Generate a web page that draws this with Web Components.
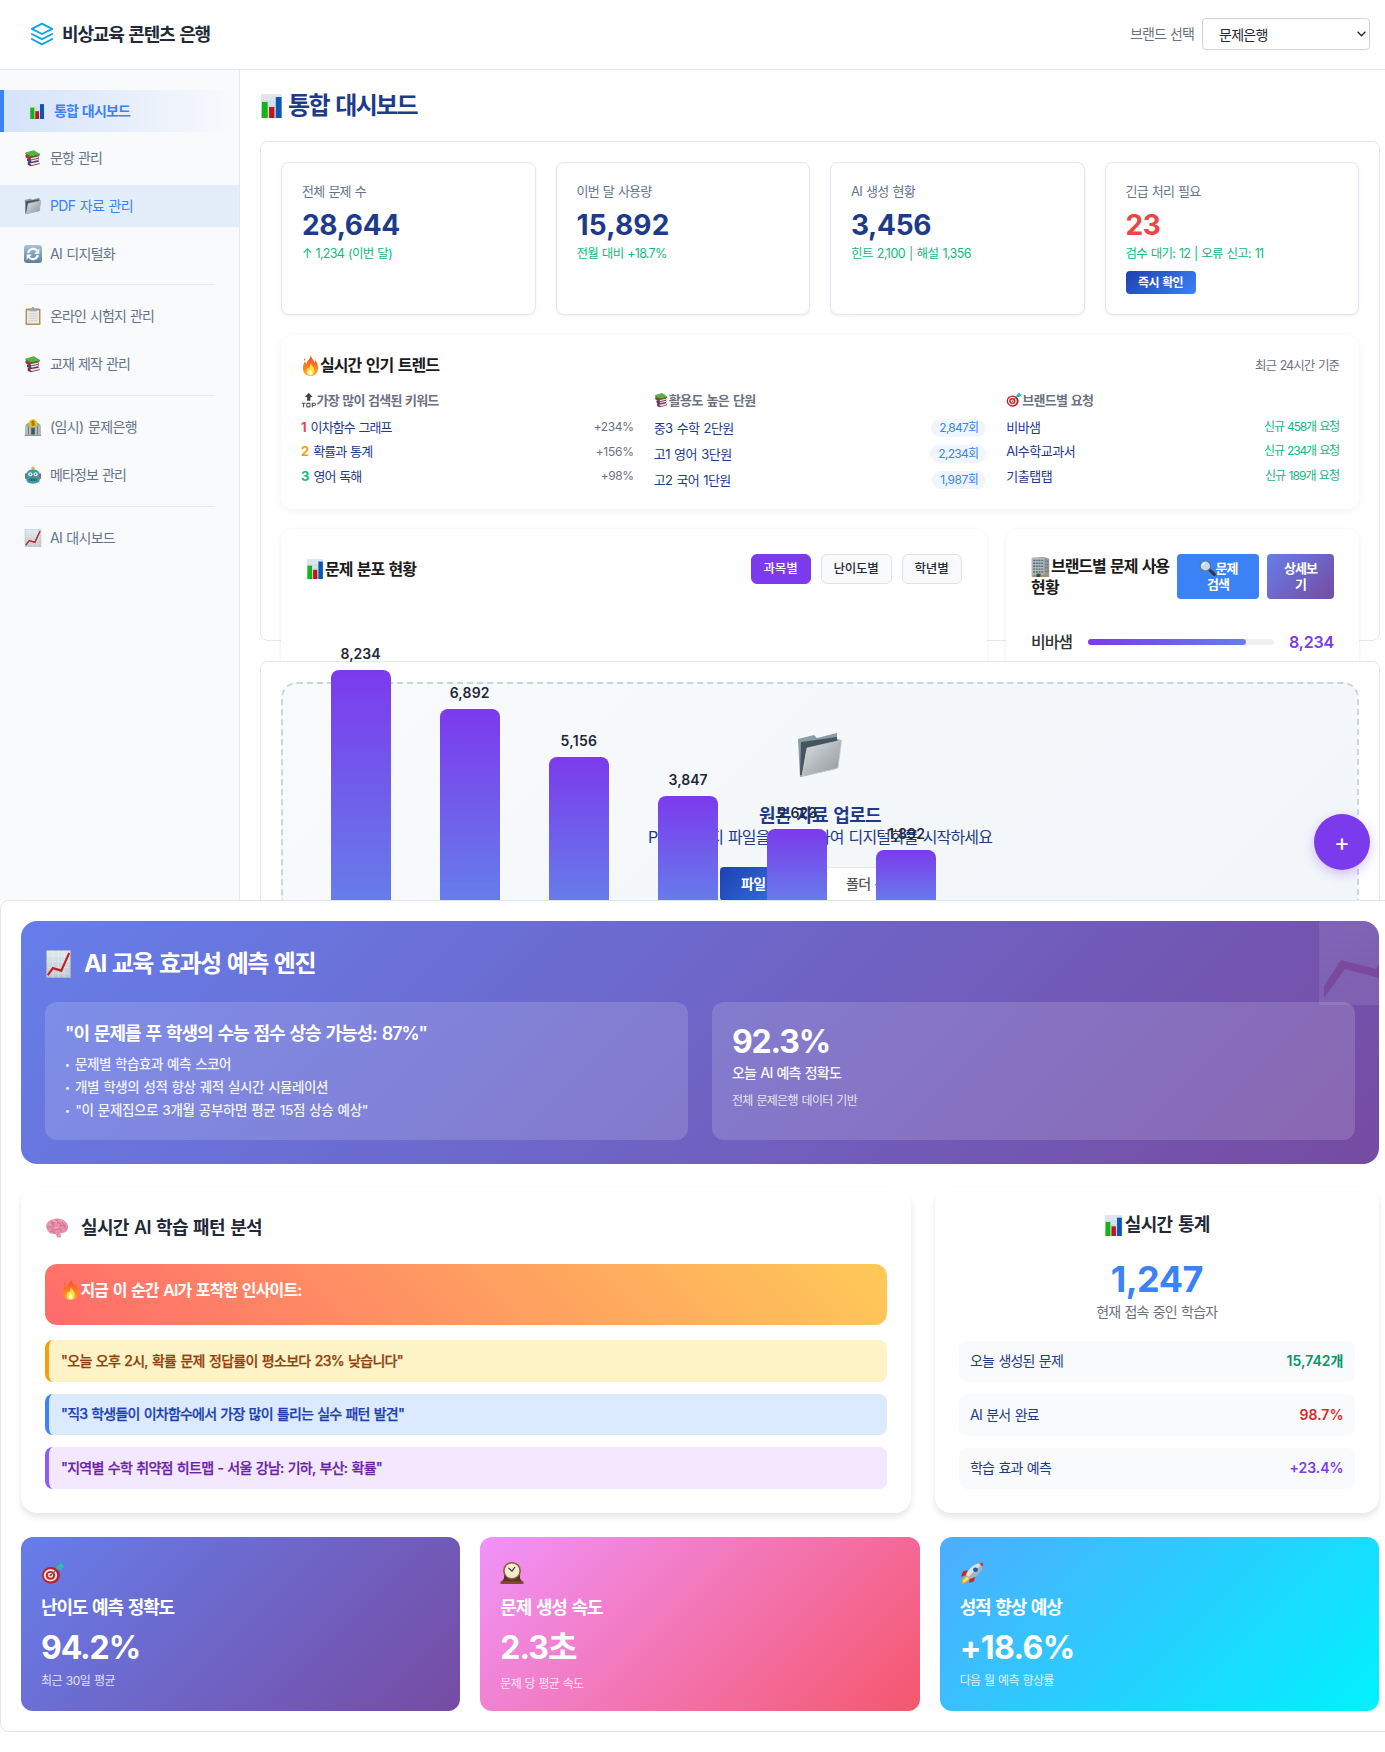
<!DOCTYPE html>
<html lang="ko">
<head>
<meta charset="utf-8">
<title>비상교육 콘텐츠 은행</title>
<style>
html,body{margin:0;padding:0;background:#fff}
body{width:1385px;height:1752px;overflow:hidden;font-family:Inter,"Noto Sans CJK KR",sans-serif;font-size:14px;line-height:20px;color:#1f2937}
</style>
</head>
<body>
<bank-app></bank-app>
<script>
const BASE = '*{box-sizing:border-box}';
const G = '<linearGradient id="pg" x1="0" y1="0" x2="0" y2="1"><stop offset="0" stop-color="#dfe9ef"/><stop offset="1" stop-color="#bcc8d0"/></linearGradient>';
const GLYPHS = {
bars:'<defs>'+G+'</defs><path fill="url(#pg)" d="M1 0h22v24H1z"/><path stroke="#fff" stroke-width=".5" opacity=".7" d="M1 5h22M1 10h22M1 15h22"/><path fill="#12b516" d="M2 8h6v16H2z"/><path fill="#c3131b" d="M9.500 13h5.500v11H9.500z"/><path fill="#0a57b8" d="M16.500 3h6v21h-6z"/>',
line:'<defs>'+G+'</defs><path fill="url(#pg)" stroke="#a9b5bd" stroke-width=".6" d="M1.4 .4h21.200v23.200H1.400z"/><path stroke="#fff" stroke-width=".4" opacity=".6" d="M2 5h20M2 10h20M2 15h20M2 20h20M7 0v24M12 0v24M17 0v24"/><path fill="none" stroke="#c4202b" stroke-width="1.900" d="M2.500 21.500 7 15.500l7.500 2.200L21.500 2.500"/>',
books:'<path fill="#7a2a55" d="M5 17l14-2 2 5-12 3-4-2z"/><path fill="#ece7df" d="M8 19l12-2 .5 2L10 21.5z"/><path fill="#1e4f96" d="M4 13l15-2 1 4-11 3-5-2z"/><path fill="#e9edf0" d="M9 15l10-2 .5 1.600L10 17z"/><path fill="#c32631" d="M2 8l17 1 1 3-11 3.400L2 11z"/><path fill="#f0ece4" d="M9 12l10-2v1.600L9.500 14z"/><path fill="#2f7f2f" d="M2 4.500L9 9.500l12-3.300v2.500L9 12 2 7z"/><path fill="#5cae45" d="M2 4.500L13 1.500l8 4.700L9 9.500z"/>',
folder:'<defs><linearGradient id="fg" x1="0" y1="0" x2="1" y2="1"><stop offset="0" stop-color="#dcdee3"/><stop offset="1" stop-color="#8f959a"/></linearGradient></defs><path fill="#8d9ba4" d="M1 4l8-2 1.500 1.500L20.500 1v3l2 .5L20 19 2 23z"/><path fill="#45555f" d="M2.500 5.500L20.500 3v3L5 10 3 22H2z"/><path fill="url(#fg)" stroke="#c9cdd1" stroke-width=".4" d="M5.500 8.500L22.800 4.600 21 18.500 3 22.800z"/>',
sync:'<defs><linearGradient id="sg" x1="0" y1="0" x2="0" y2="1"><stop offset="0" stop-color="#a9c2d6"/><stop offset="1" stop-color="#587f9f"/></linearGradient></defs><rect width="24" height="24" rx="4" fill="url(#sg)"/><path fill="none" stroke="#fff" stroke-width="2.800" d="M5.500 10.500a7 7 0 0 1 12-3M18.500 13.500a7 7 0 0 1-12 3"/><path fill="#fff" d="M20.500 4.500v7h-7zM3.500 19.500v-7h7z"/>',
clip:'<rect x="2" y="2" width="20" height="22" rx="1.500" fill="#b78f5c"/><path fill="#e9e9e7" d="M4 4.500h16V22H4z"/><path stroke="#c6c6c4" stroke-width=".8" d="M6 9h12M6 12h12M6 15h12M6 18h12"/><path fill="#9ba6ad" d="M7 2h3l1-2h2l1 2h3v3.500H7z"/>',
bank:'<path fill="#8b9a94" d="M1 22h22v2H1z"/><path fill="#9fae9f" d="M2 9l10-7 10 7v2H2z"/><path fill="#6f807b" d="M2 11h20v11H2z"/><path fill="#c6d0c8" d="M3 11h2v11H3zm4 0h2v11H7zm8 0h2v11h-2zm4 0h2v11h-2z"/><path fill="#3f5561" d="M10 14h4v8h-4z"/><circle cx="12" cy="7" r="5.500" fill="#e9bf27"/><path fill="none" stroke="#8b6a0b" stroke-width="1.200" d="M14 5q-4-1.500-4 .5t2 1.400 2 1.500-4 .9M12 3.300v7.400"/>',
robot:'<circle cx="12" cy="3" r="2.200" fill="#f0a93a"/><path fill="#bd3d25" d="M1.500 10h3v7h-3zm18 0h3v7h-3z"/><path fill="#3f9aa1" d="M3 12q0-7.500 9-7.500t9 7.500v6q0 5.500-9 5.500T3 18z"/><circle cx="8.500" cy="11" r="2.800" fill="#d8f4f5"/><circle cx="15.500" cy="11" r="2.800" fill="#d8f4f5"/><circle cx="8.500" cy="11" r="1" fill="#2c6e78"/><circle cx="15.500" cy="11" r="1" fill="#2c6e78"/><path fill="#d04a31" d="M12 12l1.300 2.500h-2.600z"/><rect x="7" y="16.500" width="10" height="3.200" rx="1" fill="#1b4b54"/><path stroke="#a9dde0" stroke-width=".7" d="M9 16.500v3M12 16.500v3M15 16.500v3"/>',
fire:'<defs><linearGradient id="f1" x1="0" y1="0" x2="0" y2="1"><stop offset="0" stop-color="#f4472a"/><stop offset=".7" stop-color="#ff8a1f"/><stop offset="1" stop-color="#ffb52e"/></linearGradient></defs><path fill="url(#f1)" d="M12.500 0c.5 4.500 4 5.500 4.500 9 1-1 1-2.500.8-3.500C20.500 8.500 22 12 21.500 16c-.6 5-4.500 8-9.500 8s-9-3-9.500-8C2.100 12 4 9 5 7c.4 1.500.8 2.500 2 3C7.500 6 12 5 12.500 0z"/><path fill="#ffe14a" d="M12.500 9c.5 3 4.500 5 4.500 9 0 3.500-2.200 5.500-5 5.500s-5-2-5-5c0-2 1-3.500 2-4.500.3 1 .7 1.500 1.500 2 0-3 1.500-4.500 2-7z"/><path fill="#fffde0" d="M12 16c.6 1.500 2 2.500 2 4.500 0 1.600-1 2.500-2.200 2.500s-2-1-2-2.500c0-1.800 1.600-2.500 2.200-4.500z"/><path fill="#f4632d" d="M3.500 5l1.800-1.500L5 7z"/>',
top:'<path fill="#424548" d="M12 1l6 6.500h-3.500V13h-5V7.500H6z"/><path fill="none" stroke="#505356" stroke-width="1.700" d="M1 16.800h6M4 16.800V23M10.200 17h2.600q1.200 0 1.200 1.200v3q0 1.200-1.200 1.200h-2.600q-1.200 0-1.200-1.200v-3q0-1.200 1.200-1.200zM17.500 23v-6.200h3.300q1.700 0 1.700 1.700t-1.700 1.700h-3.300"/>',
target:'<ellipse cx="10" cy="14.500" rx="9" ry="9" fill="#b52128"/><ellipse cx="9.500" cy="14.500" rx="6.700" ry="6.800" fill="#f3e5e1"/><ellipse cx="9.500" cy="14.500" rx="4.700" ry="4.800" fill="#c8252c"/><ellipse cx="9.500" cy="14.500" rx="2.600" ry="2.700" fill="#f5e9e5"/><circle cx="9.500" cy="14.500" r="1.100" fill="#b52128"/><path stroke="#56656d" stroke-width="1.300" d="M10 14l7-7"/><path fill="#35b5b8" d="M15.500 5l5-4.500.5 3 3 .5-4.500 4.500-3.500-.5z"/>',
building:'<path fill="#8e999c" d="M1 1l15-1 7 2v22H1z"/><path fill="#b2babb" d="M1 1h16v23H1z"/><path stroke="#53717f" stroke-width="1.700" stroke-dasharray="2.600 .9" d="M2.500 4h14M2.500 7.500h14M2.500 11h14M2.500 14.500h14M2.500 18h14"/><path stroke="#5b6b72" stroke-width="1.300" stroke-dasharray="1.500 1" d="M18 5h5M18 9h5M18 13h5M18 17h5"/><path fill="#b98d58" d="M2 21h20v3H2z"/><path fill="#344a55" d="M7 20h5v4H7z"/>',
search:'<path stroke="#33373a" stroke-width="4.500" stroke-linecap="round" d="M15 15l6.500 6.500"/><circle cx="9" cy="9" r="7.500" fill="#bcdcf4" stroke="#667580" stroke-width="1.800"/><path fill="none" stroke="#fff" opacity=".8" stroke-width="1.500" d="M5 9q0-4 4-4.500"/>',
brain:'<path fill="#e790ab" d="M2 14C-.5 9 3 4 8 2.500c5-2 11-.5 13.500 4 2.500 4 2 9-1.500 11-1.500 1-3 .8-4.500.8L16 23l-3.500.5-2-4C7 20 3 18 2 14z"/><path fill="none" stroke="#c2607f" stroke-width=".7" d="M6 5q3 1 2 4t3 3M12 3q-1 3 2 4t1 4M18 4q-2 3 1 5t1 5M2 12q4-2 5 1t5 1 4 3M5 17q3-2 5 1M10 8q-3-1-5 1M15 10q3-1 5 1"/><path fill="none" stroke="#f8bfcf" stroke-width=".9" d="M8 3.500q2 2 4 1.500M15 3q3 1 4 3M4 8q2 0 3 2M9 12q2 1 4 0"/>',
clock:'<path fill="#5d3422" d="M2 24v-3l2-3V10q0-9.500 8-9.500T20 10v8l2 3v3z"/><path fill="#7d4c30" d="M.5 21h23v3H.5z"/><ellipse cx="12" cy="9.500" rx="9" ry="9.500" fill="#8a6338"/><ellipse cx="12" cy="9.500" rx="7.300" ry="8" fill="#f3ead0"/><path fill="none" stroke="#39302a" stroke-width="1.200" d="M8.500 6.500L12 10l3-4.500"/>',
rocket:'<path fill="#f5a127" d="M2 19l5-5 4 4-6 5-4 1z"/><path fill="#ffe45c" d="M3 20l4-4 2 2-4 4-2 .5z"/><path fill="#c9262d" d="M8 9l-5 1-2 6 6-2zM15 16l-1 5-5 2 1-6z"/><path fill="#a7b6bf" d="M6 14C9 6 15 1 23 1c0 8-4 14-13 17.500z"/><path fill="#dce4e9" d="M6 14C9 6 15 1 23 1L8.500 16z"/><circle cx="15.500" cy="8.500" r="2.500" fill="#245fa7"/><path fill="#c9262d" d="M19 1.600Q21 1 23 1q0 2-.5 4z"/>'
};
const fits = new Set();
function define(name, css, html, init) {
  customElements.define(name, class extends HTMLElement {
    connectedCallback() {
      if (this.shadowRoot) return;
      const r = this.attachShadow({mode:'open'});
      const t = document.createElement('template');
      t.innerHTML = '<style>' + BASE + css + '</style>' + (typeof html === 'function' ? html(this) : html);
      r.appendChild(t.content.cloneNode(true));
      if (init) init(this, r);
    }
  });
}
const A = (e, n) => e.getAttribute(n) || '';
const T = (w, s, cls) => `<fit-text w="${w}"${cls ? ` class="${cls}"` : ''}>${s}</fit-text>`;
const I = (n, w, h) => `<pict-icon name="${n}" w="${w}" h="${h || w}"></pict-icon>`;

/* Single-line text whose tracking is set so that the line takes w pixels. */
define('fit-text', ':host{display:block;white-space:nowrap;flex:none}span{display:inline-block;vertical-align:top;word-spacing:.08em}', '<span><slot></slot></span>', (e, r) => {
  fits.add(() => {
    const s = r.querySelector('span'), w = +A(e, 'w'), n = e.textContent.length;
    if (!w || !n) return;
    s.style.letterSpacing = '0px';
    const d = (w - s.getBoundingClientRect().width) / n;
    s.style.letterSpacing = d.toFixed(3) + 'px';
  });
});
define('pict-icon', ':host{display:block;flex:none}svg{display:block}', e =>
  `<svg width="${A(e,'w')}" height="${A(e,'h')}" viewBox="0 0 24 24" preserveAspectRatio="none">${GLYPHS[A(e,'name')]}</svg>`);

define('app-header', `:host{display:flex;align-items:center;justify-content:space-between;height:70px;padding:0 15px 1px 30px;border-bottom:1px solid #e2e8f0;background:#fff}
.l,.r{display:flex;align-items:center}.l{gap:8px}.r{gap:8px}
.t{font-size:18px;font-weight:600;color:#1f2937;padding-top:1px}.b{font-size:14px;color:#6b7280}
.s{position:relative;height:32px}.s svg{position:absolute;right:4px;top:13px}
select{appearance:none;display:block;width:168px;height:32px;border:1px solid #d1d5db;border-radius:4px;background:#fff;padding:0 16px;font:14px Inter,"Noto Sans CJK KR",sans-serif;letter-spacing:-.75px;color:#1f2937}`,
`<div class="l"><svg width="24" height="24" viewBox="0 0 24 24" fill="none" stroke="#0ea5e9" stroke-width="1.900" stroke-linejoin="round" stroke-linecap="round"><path d="M12 1.600L22.200 6.800 12 12 1.800 6.800zM1.800 12L12 17.200 22.200 12M1.800 17L12 22.300 22.200 17"/></svg>${T(148,'비상교육 콘텐츠 은행','t')}</div>
<div class="r">${T(64,'브랜드 선택','b')}<div class="s"><select><option>문제은행</option></select><svg width="9" height="6" viewBox="0 0 9 6" fill="none" stroke="#1f2937" stroke-width="1.300"><path d="M.6.8l3.900 4L8.400.8"/></svg></div></div>`);

define('side-item', `:host{display:flex;align-items:center;height:42.600px;padding-left:24px;gap:8px;color:#64748b;font-size:14px}
:host([tall]){height:43px}
:host([hover]){background:#e4eefb;color:#3b82f6}
:host([active]){border-left:4px solid #3b82f6;padding-left:25px;gap:9px;background:linear-gradient(90deg,#d4e2fb,#f8fafc 97%);color:#3b82f6;font-weight:600}`,
 e => I(A(e,'icon'), e.hasAttribute('active') ? 16 : 18, e.hasAttribute('active') ? 17 : 18) + T(A(e,'w'), A(e,'label')));
define('side-nav', `:host{display:flex;flex-direction:column;gap:5px;width:240px;height:830px;flex:none;padding-top:19.500px;background:#f8fafc;border-right:1px solid #e2e8f0}
hr{border:0;height:1px;width:191px;background:#e2e8f0;margin:4.500px 0 4.500px 24px;flex:none}`,
`<side-item active icon="bars" w="76" label="통합 대시보드"></side-item><side-item icon="books" w="52" label="문항 관리"></side-item><side-item hover icon="folder" w="83" label="PDF 자료 관리"></side-item><side-item icon="sync" w="65" label="AI 디지털화"></side-item><hr>
<side-item tall icon="clip" w="104" label="온라인 시험지 관리"></side-item><side-item tall icon="books" w="80" label="교재 제작 관리"></side-item><hr>
<side-item tall icon="bank" w="87" label="(임시) 문제은행"></side-item><side-item tall icon="robot" w="76" label="메타정보 관리"></side-item><hr><side-item tall icon="line" w="65" label="AI 대시보드"></side-item>`);

define('stat-card', `:host{display:block;flex:1;height:153px;border:1px solid #e2e8f0;border-radius:8px;background:#fff;padding:18px 20px;box-shadow:0 1px 3px rgba(30,64,175,.08)}
.l{font-size:13px;color:#64748b}.v{font-size:28px;font-weight:700;line-height:34px;color:#1e3a8a;margin-top:7px}.s{font-size:12.500px;color:#10b981;margin-top:2px}
:host([alert]) .v{color:#ef4444}`,
 e => T(A(e,'lw'),A(e,'label'),'l') + T(A(e,'vw'),A(e,'value'),'v') + T(A(e,'sw'),A(e,'sub'),'s') + '<slot></slot>');
define('ui-button', `:host{display:inline-flex;align-items:center;justify-content:center;border-radius:4px;color:#fff;font-weight:600;font-size:12px;background:linear-gradient(135deg,#1e40af,#3b82f6)}`, '<slot></slot>');

define('trend-row', `:host{display:flex;align-items:center;justify-content:space-between;height:24.500px;font-size:13px;color:#1e3a8a}
:host([badge]){height:26px}.a{display:flex;gap:4px}b{font-weight:700;color:var(--rank)}.r{font-size:12px;color:#6b7280;margin-top:1px}
:host([green]) .r{color:#10b981;margin:0}:host([badge]) .r{color:#3b82f6;background:#eff6ff;border-radius:9px;height:18px;line-height:18px;padding:0 8px;margin:0}`,
 e => `<div class="a">${A(e,'rank') ? '<b>'+A(e,'rank')+'</b>' : ''}${T(A(e,'w'),A(e,'label'))}</div>${T(A(e,'rw'),A(e,'value'),'r')}`);
define('trend-card', `:host{display:block;height:174px;border-radius:12px;background:#fff;padding:20px 20px;box-shadow:0 2px 8px rgba(0,0,0,.06)}
.h{display:flex;justify-content:space-between;align-items:center;height:20px}.t{display:flex;gap:0;align-items:center;font-size:16px;font-weight:600;color:#1a1a1a}.n{font-size:12.500px;color:#6b7280;padding-top:1px}
.g{display:flex;gap:20px;margin-top:14.500px}.c{flex:1;min-width:0}.k{display:flex;align-items:center;height:20px;font-size:13px;font-weight:600;color:#6b7280;margin-bottom:5px}`,
`<div class="h"><div class="t">${I('fire',19,21)}${T(119,'실시간 인기 트렌드')}</div>${T(84,'최근 24시간 기준','n')}</div>
<div class="g"><div class="c"><div class="k">${I('top',15.5,16)}${T(122,'가장 많이 검색된 키워드')}</div>
<trend-row style="--rank:#ef4444" rank="1" w="81" label="이차함수 그래프" rw="40" value="+234%"></trend-row><trend-row style="--rank:#f59e0b" rank="2" w="59" label="확률과 통계" rw="38" value="+156%"></trend-row><trend-row style="--rank:#10b981" rank="3" w="48" label="영어 독해" rw="33" value="+98%"></trend-row></div>
<div class="c"><div class="k">${I('books',15,16)}${T(87,'활용도 높은 단원')}</div>
<trend-row badge w="80" label="중3 수학 2단원" rw="39" value="2,847회"></trend-row><trend-row badge w="78" label="고1 영어 3단원" rw="40" value="2,234회"></trend-row><trend-row badge w="77" label="고2 국어 1단원" rw="38" value="1,987회"></trend-row></div>
<div class="c"><div class="k">${I('target',16,15)}${T(71,'브랜드별 요청')}</div>
<trend-row green w="34" label="비바샘" rw="75" value="신규 458개 요청"></trend-row><trend-row green w="69" label="AI수학교과서" rw="75" value="신규 234개 요청"></trend-row><trend-row green w="46" label="기출탭탭" rw="74" value="신규 189개 요청"></trend-row></div></div>`);

define('chart-bar', `:host{display:flex;flex-direction:column;align-items:center;width:60px;gap:6px;color:#1f2937;font-size:14px;font-weight:600}div{width:60px;border-radius:8px 8px 0 0;background:linear-gradient(180deg,#7c3aed,#667eea)}`,
 e => T(A(e,'w'),A(e,'value')) + `<div style="height:${A(e,'h')}px"></div>`);
define('distribution-card', `:host{display:block;width:705.500px;height:400px;border-radius:12px;background:#fff;padding:25px 25px 0;box-shadow:0 1px 4px rgba(0,0,0,.08)}
.h{display:flex;justify-content:space-between;align-items:center;height:30px}.t{display:flex;align-items:center;gap:1px;font-size:16px;font-weight:600;color:#1a1a1a}
.tabs{display:flex;gap:10px}.tabs div{height:30px;border:1px solid #e0e2e6;border-radius:6px;background:#f9fafb;padding:0 12px;line-height:28px;font-size:12.500px;font-weight:500;color:#1f2937}.tabs .on{background:#7c3aed;border-color:#7c3aed;color:#fff;padding:0 12px}
.b{display:flex;align-items:flex-end;justify-content:space-between;height:260px;width:606px;margin:60px 0 0 24.500px;position:relative;z-index:2}`,
`<div class="h"><div class="t">${I('bars',18,20)}${T(91,'문제 분포 현황')}</div><div class="tabs"><div class="on">${T(34,'과목별')}</div><div>${T(45,'난이도별')}</div><div>${T(34,'학년별')}</div></div></div>
<div class="b"><chart-bar w="40" value="8,234" h="234"></chart-bar><chart-bar w="40" value="6,892" h="195"></chart-bar><chart-bar w="37" value="5,156" h="147"></chart-bar><chart-bar w="39" value="3,847" h="108"></chart-bar><chart-bar w="39" value="2,623" h="75"></chart-bar><chart-bar w="37" value="1,892" h="54"></chart-bar></div>`);
define('brand-card', `:host{display:block;width:353px;height:400px;border-radius:12px;background:#fff;padding:25px 25px 0;box-shadow:0 1px 4px rgba(0,0,0,.08)}
.h{display:flex;justify-content:space-between;height:45px}.t{font-size:16px;font-weight:600;line-height:21px;color:#1a1a1a;padding-top:2px}.f{display:flex;align-items:center;gap:1px}.bs{display:flex;gap:8px}
.c{text-align:center;line-height:16px;font-size:13px;margin-top:-2px}.s{background:#3b82f6;width:82px;height:45px}.d{background:linear-gradient(135deg,#667eea,#764ba2);width:67px;height:45px}.c fit-text{display:block}.c .f{gap:0;justify-content:center}
.r{display:flex;align-items:center;height:24px;margin-top:30.500px}.n{width:57px;font-size:16px;font-weight:500;color:#333}.m{flex:1;height:6px;border-radius:3px;background:#f0f0f0}.m i{display:block;height:6px;width:85%;border-radius:3px;background:linear-gradient(90deg,#7c3aed,#667eea)}.v{font-size:16px;font-weight:600;color:#7c3aed;margin-left:15px}`,
`<div class="h"><div class="t"><div class="f">${I('building',19,20)}${T(118,'브랜드별 문제 사용')}</div>${T(28,'현황')}</div><div class="bs"><ui-button class="s"><div class="c"><div class="f">${I('search',17,16)}${T(22,'문제')}</div>${T(22,'검색')}</div></ui-button><ui-button class="d"><div class="c">${T(33,'상세보')}${T(11,'기')}</div></ui-button></div></div>
<div class="r"><div class="n">${T(41,'비바샘')}</div><div class="m"><i></i></div>${T(45,'8,234','v')}</div>`);

define('upload-panel', `:host{display:block;height:500px;border:1px solid #e2e8f0;border-radius:8px;background:#fff;padding:20px;position:relative;z-index:1}
.z{display:flex;flex-direction:column;align-items:center;height:420px;border:2px dashed #cbd5e1;border-radius:16px;background:linear-gradient(135deg,#f8fafc,#f1f5f9);color:#1e3a8a;padding-top:47px}
.t{font-size:18px;font-weight:600;margin-top:26px;line-height:22px}.p{font-size:16px;margin-top:0}.b{display:flex;gap:10px;margin-top:20px;font-size:14px}.b ui-button{width:95px;height:34px;font-size:14px}.o{background:#fff;border:1px solid #e5e7eb;color:#555}.b .o{font-weight:500}`,
`<div class="z">${I('folder',48,48)}${T(122,'원본 자료 업로드','t')}${T(344,'PDF/이미지 파일을 업로드하여 디지털화를 시작하세요','p')}<div class="b"><ui-button>${T(53,'파일 선택')}</ui-button><ui-button class="o">${T(53,'폴더 선택')}</ui-button></div></div>`);

define('dash-main', `:host{display:block;flex:1;min-width:0;padding:21px 5px 0 20px}
h1{display:flex;align-items:center;gap:5px;height:30px;margin:0 0 20px;font-size:24px;line-height:30px;font-weight:600;color:#1e3a8a}
.p{height:500px;border:1px solid #e2e8f0;border-radius:8px;padding:20px;background:#fff;margin-bottom:20px}
.g{display:flex;gap:20px;margin-bottom:20px}.q{display:flex;justify-content:space-between;margin-top:20px}
.k{width:70px;height:23px;margin-top:7px}`,
`<h1>${I('bars',23,24)}${T(129,'통합 대시보드')}</h1>
<div class="p"><div class="g"><stat-card lw="64" label="전체 문제 수" vw="98" value="28,644" sw="90" sub="↑ 1,234 (이번 달)"></stat-card><stat-card lw="75" label="이번 달 사용량" vw="93" value="15,892" sw="90" sub="전월 대비 +18.7%"></stat-card><stat-card lw="64" label="AI 생성 현황" vw="80" value="3,456" sw="120" sub="힌트 2,100 | 해설 1,356"></stat-card><stat-card alert lw="75" label="긴급 처리 필요" vw="35" value="23" sw="138" sub="검수 대기: 12 | 오류 신고: 11"><ui-button class="k">${T(45,'즉시 확인')}</ui-button></stat-card></div>
<trend-card></trend-card><div class="q"><distribution-card></distribution-card><brand-card></brand-card></div></div><upload-panel></upload-panel>`);

define('hero-panel', `:host{display:block;position:relative;height:243px;border-radius:16px;overflow:hidden;background:linear-gradient(135deg,#667eea,#764ba2);color:#fff;padding:24px}
.h{display:flex;align-items:center;gap:12px;height:37px;font-size:24px;font-weight:700;margin-bottom:20px}
.g{display:flex;gap:24px;position:relative}.c{flex:1;height:138px;border-radius:12px;background:rgba(255,255,255,.15);padding:20px}
.a{font-size:18px;font-weight:600;line-height:22px;margin:1px 0 7.500px}.l{font-size:13.500px;line-height:23px;opacity:.9;font-weight:500}small{font-size:9px;line-height:1;vertical-align:1px;padding-right:1.500px}
.v{font-size:32px;font-weight:700;line-height:40px}.m{font-size:14px;font-weight:500;opacity:.95;margin-top:1px}.n{font-size:12px;opacity:.8;margin-top:8px}
.w{position:absolute;right:-60px;top:0;opacity:.1}`,
`<svg class="w" width="120" height="84" viewBox="0 0 120 84"><path fill="#dfe9ef" d="M0 0h120v84H0z"/><path stroke="#fff" stroke-width=".7" d="M0 8h120M0 16h120M0 24h120M0 32h120M0 40h120M0 48h120M0 56h120M0 64h120M0 72h120M0 80h120M6 0v84M14 0v84M22 0v84M30 0v84M38 0v84M46 0v84M54 0v84"/><path fill="#b4001e" d="M5 65L22 39l35 9 3-5v14l-34-9L5 77z"/></svg>
<div class="h">${I('line',27,28)}${T(231,'AI 교육 효과성 예측 엔진')}</div>
<div class="g"><div class="c">${T(362,'"이 문제를 푸 학생의 수능 점수 상승 가능성: 87%"','a')}${T(166,'<small>•</small> 문제별 학습효과 예측 스코어','l')}${T(263,'<small>•</small> 개별 학생의 성적 향상 궤적 실시간 시뮬레이션','l')}${T(303,'<small>•</small> "이 문제집으로 3개월 공부하면 평균 15점 상승 예상"','l')}</div>
<div class="c">${T(98,'92.3%','v')}${T(109,'오늘 AI 예측 정확도','m')}${T(125,'전체 문제은행 데이터 기반','n')}</div></div>`);

define('insight-row', `:host{display:flex;align-items:center;height:41.500px;margin-bottom:12px;border-radius:8px;border-left:4px solid var(--line);background:var(--bg);color:var(--fg);padding-left:12px;font-weight:500;font-size:14px}fit-text{-webkit-text-stroke:.25px}`, e => T(A(e,'w'), A(e,'label')));
define('pattern-card', `:host{display:block;width:889.500px;height:325px;border-radius:16px;background:#fff;padding:24px;box-shadow:0 4px 6px rgba(0,0,0,.1)}
.h{display:flex;align-items:center;gap:12px;height:31px;font-size:18px;font-weight:600;margin-bottom:20.500px}
.a{display:flex;gap:0;height:61.500px;border-radius:12px;background:linear-gradient(45deg,#ff6b6b,#feca57);color:#fff;font-size:16px;font-weight:600;padding:15.500px 16px;margin-bottom:15px;line-height:22px}`,
`<div class="h">${I('brain',24,21)}${T(181,'실시간 AI 학습 패턴 분석')}</div><div class="a">${I('fire',19.5,21)}${T(221,'지금 이 순간 AI가 포착한 인사이트:')}</div>
<insight-row style="--line:#f59e0b;--bg:#fef3c7;--fg:#92400e" w="342" label="&quot;오늘 오후 2시, 확률 문제 정답률이 평소보다 23% 낮습니다&quot;"></insight-row><insight-row style="--line:#3b82f6;--bg:#dbeafe;--fg:#1e40af" w="343" label="&quot;직3 학생들이 이차함수에서 가장 많이 틀리는 실수 패턴 발견&quot;"></insight-row><insight-row style="--line:#8b5cf6;--bg:#f3e8ff;--fg:#6b21a8" w="321" label="&quot;지역별 수학 취약점 히트맵 - 서울 강남: 기하, 부산: 확률&quot;"></insight-row>`);
define('live-row', `:host{display:flex;align-items:center;justify-content:space-between;height:41.500px;margin-bottom:12px;border-radius:8px;background:#f9fafb;padding:0 11.500px;font-size:14px;color:#1e3a8a}.v{font-weight:600;color:var(--c)}`, e => T(A(e,'w'),A(e,'label')) + T(A(e,'vw'),A(e,'value'),'v'));
define('live-card', `:host{display:block;width:444.500px;height:325px;border-radius:16px;background:#fff;padding:24px;box-shadow:0 4px 6px rgba(0,0,0,.1)}
.h{display:flex;align-items:center;justify-content:center;gap:2px;height:26px;font-size:18px;font-weight:600}.v{font-size:36px;font-weight:700;line-height:44px;color:#3b82f6;text-align:center;margin-top:19px}.n{text-align:center;color:#6b7280;margin:1px 0 18.500px}`,
`<div class="h">${I('bars',19,21)}${T(85,'실시간 통계')}</div>${T(92,'1,247','v')}${T(121,'현재 접속 중인 학습자','n')}
<live-row style="--c:#059669" w="93" label="오늘 생성된 문제" vw="57" value="15,742개"></live-row><live-row style="--c:#dc2626" w="69" label="AI 분서 완료" vw="44" value="98.7%"></live-row><live-row style="--c:#7c3aed" w="81" label="학습 효과 예측" vw="54" value="+23.4%"></live-row>`);
define('metric-card', `:host{display:block;flex:1;height:174px;border-radius:12px;background:linear-gradient(135deg,var(--a),var(--b));color:#fff;padding:25px 20px}
.t{font-size:18px;font-weight:600;line-height:22px;margin-top:13px}.v{font-size:32px;font-weight:700;line-height:40px;margin-top:9px}.n{font-size:12px;opacity:.8;margin-top:var(--gap,3px)}`,
 e => I(A(e,'icon'),24,22) + T(A(e,'tw'),A(e,'label'),'t') + T(A(e,'vw'),A(e,'value'),'v') + T(A(e,'nw'),A(e,'note'),'n'));
define('ai-section', `:host{display:block;width:1400px;height:831.500px;flex:none;border:1px solid #e2e8f0;border-radius:8px;background:#fff;padding:20px}
.w{width:1358px}.r{display:flex;justify-content:space-between;margin:24px 0}.m{display:flex;gap:20px}`,
`<div class="w"><hero-panel></hero-panel><div class="r"><pattern-card></pattern-card><live-card></live-card></div><div class="m">
<metric-card style="--a:#667eea;--b:#764ba2" icon="target" tw="133" label="난이도 예측 정확도" vw="99" value="94.2%" nw="74" note="최근 30일 평균"></metric-card>
<metric-card style="--a:#f093fb;--b:#f5576c;--gap:6px" icon="clock" tw="102" label="문제 생성 속도" vw="76" value="2.3초" nw="83" note="문제 당 평균 속도"></metric-card>
<metric-card style="--a:#4facfe;--b:#00f2fe" icon="rocket" tw="102" label="성적 향상 예상" vw="115" value="+18.6%" nw="94" note="다음 월 예측 향상률"></metric-card></div></div>`);

define('bank-app', `:host{display:block;width:1385px;height:1752px;overflow:hidden}
.top{height:900px;overflow:hidden;position:relative;isolation:isolate}.row{display:flex;height:830px}
.fab{position:absolute;z-index:3;right:15px;bottom:30px;width:56px;height:56px;border-radius:50%;background:#7c3aed;box-shadow:0 4px 12px rgba(124,58,237,.3);color:#fff;font-size:24px;line-height:58px;text-align:center}`,
`<div class="top"><app-header></app-header><div class="row"><side-nav></side-nav><dash-main></dash-main></div><div class="fab">+</div></div><ai-section></ai-section>`);
fits.forEach(f => f());
</script>
</body>
</html>
